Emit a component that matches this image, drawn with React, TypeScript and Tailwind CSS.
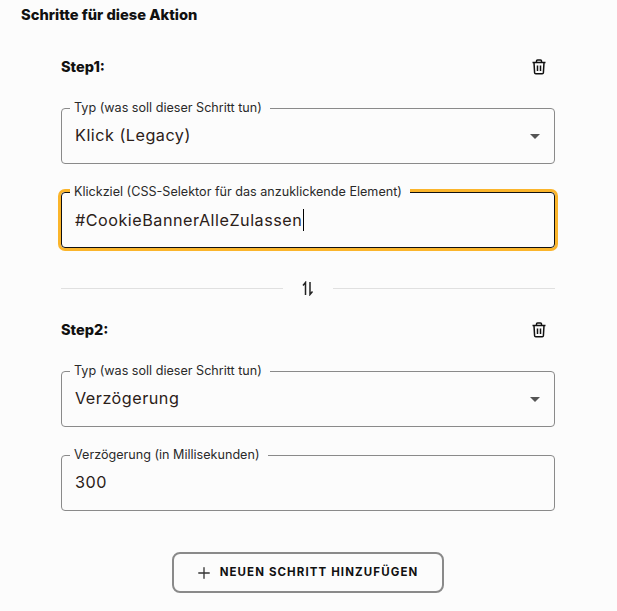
import { Plus } from "lucide-react";

const font = "font-['Inter','Noto_Sans',sans-serif]";

function TrashIcon() {
  return (
    <svg viewBox="0 0 16 16" className="h-4 w-4" fill="none" stroke="currentColor" strokeWidth="1.5">
      <path d="M1.5 3.5h13M5.5 3.5V2a1 1 0 0 1 1-1h3a1 1 0 0 1 1 1v1.5" />
      <path d="M3 3.5l.6 10.2a1.2 1.2 0 0 0 1.2 1.1h6.4a1.2 1.2 0 0 0 1.2-1.1L13 3.5" />
      <path d="M6.5 6.5v5.5M9.5 6.5v5.5" />
    </svg>
  );
}

function SwapIcon() {
  return (
    <svg viewBox="0 0 12 15" className="h-[15px] w-3" fill="none" stroke="#222" strokeWidth="1.5">
      <path d="M3.5 14V1.5L1 4.5" />
      <path d="M8 1v12.5l2.5-3" />
    </svg>
  );
}

function Field({ label, value, select, focused }: { label: string; value: string; select?: boolean; focused?: boolean }) {
  return (
    <fieldset
      className={`h-[63px] rounded border pl-[13px] pr-3 ${
        focused ? "border-[#111] shadow-[0_0_0_3px_#fbb52b]" : "border-[#8a8a8a]"
      }`}
    >
      <legend className="-ml-[5px]">
        <span className="block bg-[#fcfcfc] pl-1 pr-2 text-[12.6px] leading-[14px] text-[#2a2a2a]">{label}</span>
      </legend>
      <div className="flex h-[40px] items-center justify-between">
        <span className={`text-[16.2px] tracking-[0.5px] text-[#2b2018] ${focused ? "-translate-y-px" : ""}`}>
          {value}
          {focused && <span className="ml-px inline-block h-[22px] w-px translate-y-[5px] bg-black" />}
        </span>
        {select && <span className="mr-[2px] mt-[2px] h-0 w-0 border-x-[5px] border-t-[5px] border-x-transparent border-t-[#555]" />}
      </div>
    </fieldset>
  );
}

function Step({ title, children }: { title: string; children: React.ReactNode }) {
  return (
    <section>
      <div className="flex h-[20px] items-center justify-between">
        <h3 className="text-[14.5px] font-extrabold text-[#111]">{title}</h3>
        <button className="mr-[8px] text-[#111]">
          <TrashIcon />
        </button>
      </div>
      <div className="mt-[24px] space-y-[21px]">{children}</div>
    </section>
  );
}

export default function App() {
  return (
    <div className={`${font} h-[611px] w-[617px] overflow-hidden bg-[#fcfcfc] pt-[7px]`}>
      <h2 className="ml-[21px] text-[14.7px] font-extrabold leading-[16px] text-[#111]">Schritte für diese Aktion</h2>
      <div className="ml-[61px] mt-[34px] w-[494px]">
        <Step title="Step1:">
          <Field label="Typ (was soll dieser Schritt tun)" value="Klick (Legacy)" select />
          <Field label="Klickziel (CSS-Selektor für das anzuklickende Element)" value="#CookieBannerAlleZulassen" focused />
        </Step>
        <div className="mb-[24px] mt-[33px] flex items-center gap-[19px]">
          <div className="h-px flex-1 bg-[#e0e0e0]" />
          <SwapIcon />
          <div className="h-px flex-1 bg-[#e0e0e0]" />
        </div>
        <Step title="Step2:">
          <Field label="Typ (was soll dieser Schritt tun)" value="Verzögerung" select />
          <Field label="Verzögerung (in Millisekunden)" value="300" />
        </Step>
        <div className="mt-[41px] flex justify-center">
          <button className="flex h-[41px] w-[272px] items-center justify-center gap-[7px] rounded-lg border-2 border-[#8a8a8a] pr-[3px] text-[11.5px] font-bold tracking-[1.1px] text-[#111]">
            <Plus className="h-[18px] w-[18px] text-[#333]" strokeWidth={1.75} />
            NEUEN SCHRITT HINZUFÜGEN
          </button>
        </div>
      </div>
    </div>
  );
}
